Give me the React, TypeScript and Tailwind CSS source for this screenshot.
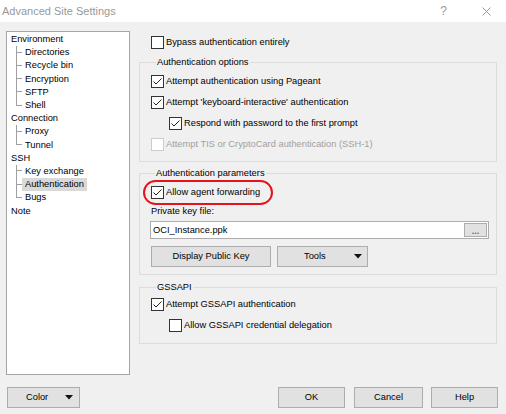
import React from 'react';
import clsx from 'clsx';

type TreeGroup = { label: string; children: string[] };

const tree: TreeGroup[] = [
  { label: 'Environment', children: ['Directories', 'Recycle bin', 'Encryption', 'SFTP', 'Shell'] },
  { label: 'Connection', children: ['Proxy', 'Tunnel'] },
  { label: 'SSH', children: ['Key exchange', 'Authentication', 'Bugs'] },
  { label: 'Note', children: [] },
];

const selected = 'Authentication';

const Check = ({
  label,
  checked,
  disabled,
  className,
}: {
  label: string;
  checked?: boolean;
  disabled?: boolean;
  className?: string;
}) => (
  <div className={clsx('flex items-center h-[13px] gap-[2px]', className)}>
    <span
      className={clsx(
        'w-[13px] h-[13px] shrink-0 border bg-white flex items-center justify-center',
        disabled ? 'border-[#cccccc]' : 'border-[#333333]'
      )}
    >
      {checked && (
        <svg width="11" height="11" viewBox="0 0 11 11">
          <path d="M1.5 5.5 L4 8 L9.5 2.5" stroke="#222" strokeWidth="1" fill="none" />
        </svg>
      )}
    </span>
    <span className={clsx('whitespace-nowrap', disabled ? 'text-[#a0a0a0]' : 'text-black')}>{label}</span>
  </div>
);

const Group = ({
  title,
  className,
  children,
}: {
  title: string;
  className?: string;
  children: React.ReactNode;
}) => (
  <fieldset className={clsx('border border-[#dcdcdc]', className)}>
    <legend className="ml-[5px] px-[1px] leading-[12px]">{title}</legend>
    {children}
  </fieldset>
);

const Button = ({ className, children }: { className?: string; children: React.ReactNode }) => (
  <div
    className={clsx(
      'h-[21px] flex items-center bg-[#e1e1e1] border border-[#adadad] text-black',
      className
    )}
  >
    {children}
  </div>
);

const Caret = () => (
  <svg width="8" height="5" viewBox="0 0 8 5">
    <path d="M0 0 H8 L4 4.5 Z" fill="#111" />
  </svg>
);

const Tree = () => (
  <div className="w-[124px] h-[344px] border border-[#a5a5a5] bg-white pt-[1px]">
    {tree.map((g) => (
      <div key={g.label}>
        <div className="h-[13.2px] flex items-center pl-[4px]">{g.label}</div>
        <div className="pl-[9px]">
          {g.children.map((c, i) => {
            const last = i === g.children.length - 1;
            return (
              <div key={c} className="h-[13.2px] flex">
                <div className="w-[6px] flex flex-col">
                  <div className="h-1/2 border-l border-b border-[#a0a0a0]" />
                  <div className={clsx('flex-1', !last && 'border-l border-[#a0a0a0]')} />
                </div>
                <span
                  className={clsx(
                    'px-[3px] flex items-center',
                    c === selected && 'bg-[#d9d9d9]'
                  )}
                >
                  {c}
                </span>
              </div>
            );
          })}
        </div>
      </div>
    ))}
  </div>
);

export default function App() {
  return (
    <div className="w-[506px] h-[414px] bg-[#f0f0f0] flex flex-col text-[9.3px] leading-[13px] font-['Liberation_Sans',Arial,sans-serif] text-black overflow-hidden">
      {/* title bar */}
      <div className="h-[22px] bg-white flex items-center justify-between pl-[2px] pr-[15px]">
        <span className="text-[11px] text-[#999999]">Advanced Site Settings</span>
        <div className="flex items-center gap-[35px]">
          <span className="text-[12px] text-[#999999]">?</span>
          <svg width="9" height="9" viewBox="0 0 9 9">
            <path d="M0.5 0.5 L8.5 8.5 M8.5 0.5 L0.5 8.5" stroke="#999" strokeWidth="1" />
          </svg>
        </div>
      </div>

      <div className="flex pt-[9px] pl-[6px]">
        <Tree />

        <div className="ml-[9px] w-[358px] flex flex-col">
          <Check label="Bypass authentication entirely" className="mt-[5px] ml-[12px]" />

          <Group title="Authentication options" className="mt-[7px] pt-[7px] pb-[10px] pl-[11px] flex flex-col gap-[8px]">
            <Check label="Attempt authentication using Pageant" checked />
            <Check label="Attempt 'keyboard-interactive' authentication" checked />
            <Check label="Respond with password to the first prompt" checked className="ml-[18px]" />
            <Check label="Attempt TIS or CryptoCard authentication (SSH-1)" disabled />
          </Group>

          <Group title="Authentication parameters" className="mt-[5px] pt-[7px] pb-[7px] pl-[10px]">
            <div className="relative w-fit ml-[1px]">
              <Check label="Allow agent forwarding" checked />
              <div className="absolute -left-[8px] -top-[6px] w-[130px] h-[25px] border-[2.5px] border-[#e3141d] rounded-[13px]" />
            </div>
            <div className="mt-[6px] h-[12px] leading-[12px] ml-[1px]">Private key file:</div>
            <div className="mt-[4px] w-[339px] h-[18px] bg-white border border-[#adadad] flex items-center justify-between pl-[2px] pr-[1px]">
              <span>OCI_Instance.ppk</span>
              <div className="w-[23px] h-[14px] bg-[#e1e1e1] border border-[#adadad] flex items-end justify-center text-[9px] leading-[10px] font-bold text-[#4a6a9a]">
                ...
              </div>
            </div>
            <div className="mt-[7px] flex gap-[6px] ml-[1px]">
              <Button className="w-[120px] justify-center">Display Public Key</Button>
              <Button className="w-[91px] justify-between pl-[26px] pr-[5px]">
                <span>Tools</span>
                <Caret />
              </Button>
            </div>
          </Group>

          <Group title="GSSAPI" className="mt-[6px] pt-[5px] pb-[11px] pl-[11px] flex flex-col gap-[8px]">
            <Check label="Attempt GSSAPI authentication" checked />
            <Check label="Allow GSSAPI credential delegation" className="ml-[18px]" />
          </Group>
        </div>
      </div>

      <div className="mt-[12px] flex items-center pl-[7px] pr-[8px]">
        <Button className="w-[73px] justify-between pl-[18px] pr-[6px]">
          <span>Color</span>
          <Caret />
        </Button>
        <div className="ml-auto flex">
          <Button className="w-[67px] justify-center border-[#0078d7]">OK</Button>
          <Button className="w-[69px] justify-center ml-[9px]">Cancel</Button>
          <Button className="w-[67px] justify-center ml-[8px]">Help</Button>
        </div>
      </div>
    </div>
  );
}
